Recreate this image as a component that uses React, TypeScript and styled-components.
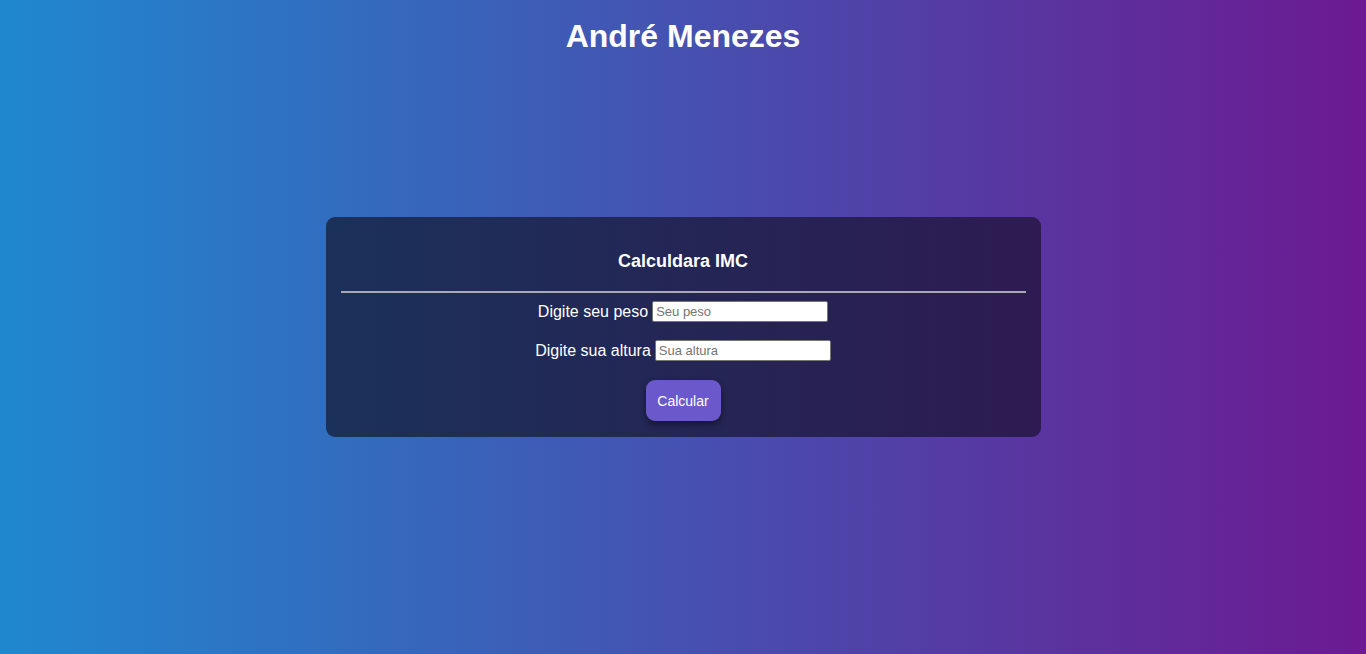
import styled, { createGlobalStyle } from 'styled-components';

const GlobalStyle = createGlobalStyle`
  html, body {
    margin: 0;
    padding: 0;
  }
  body {
    font-family: "Liberation Sans", Arial, sans-serif;
    color: #fff;
  }
`;

const Page = styled.main`
  min-height: 654px;
  background: linear-gradient(to right, #1f88cf, #6c1a91);
  display: flex;
  flex-direction: column;
  align-items: center;
  box-sizing: border-box;
  padding-top: 18px;
`;

const Title = styled.h1`
  margin: 0;
  font-size: 32px;
  line-height: 37px;
  font-weight: 700;
  text-align: center;
`;

const Card = styled.section`
  margin-top: 162px;
  width: 715px;
  box-sizing: border-box;
  padding: 30px 15px 16px;
  border-radius: 9px;
  background: linear-gradient(to right, #1b3159, #2d1b51);
  display: flex;
  flex-direction: column;
  align-items: center;
`;

const CardTitle = styled.h2`
  margin: 0;
  font-size: 18px;
  line-height: 29px;
  font-weight: 700;
`;

const Divider = styled.hr`
  align-self: stretch;
  margin: 15px 0 8px;
  border: none;
  height: 2px;
  background: #a9a9b4;
`;

const Row = styled.label`
  display: flex;
  align-items: center;
  gap: 4px;
  font-size: 16px;
  line-height: 21px;
  margin-bottom: 18px;
`;

const Input = styled.input`
  width: 176px;
  height: 21px;
  box-sizing: border-box;
  border: 1px solid #767676;
  border-radius: 2px;
  padding: 1px 3px;
  font-family: "Liberation Sans", Arial, sans-serif;
  font-size: 13px;
  background: #fff;
  color: #222;
  outline: none;

  &::placeholder {
    color: #757575;
  }
`;

const Button = styled.button`
  margin-top: 1px;
  width: 75px;
  height: 41px;
  border: none;
  border-radius: 9px;
  background: #6b59cb;
  color: #fff;
  font-family: "Liberation Sans", Arial, sans-serif;
  font-size: 14px;
  font-weight: 400;
  box-shadow: 0 3px 6px rgba(0, 0, 0, 0.45);
  cursor: pointer;
`;

export default function App() {
  return (
    <>
      <GlobalStyle />
      <Page>
        <Title>André Menezes</Title>
        <Card>
          <CardTitle>Calculdara IMC</CardTitle>
          <Divider />
          <Row>
            Digite seu peso
            <Input type="text" placeholder="Seu peso" />
          </Row>
          <Row>
            Digite sua altura
            <Input type="text" placeholder="Sua altura" />
          </Row>
          <Button>Calcular</Button>
        </Card>
      </Page>
    </>
  );
}
